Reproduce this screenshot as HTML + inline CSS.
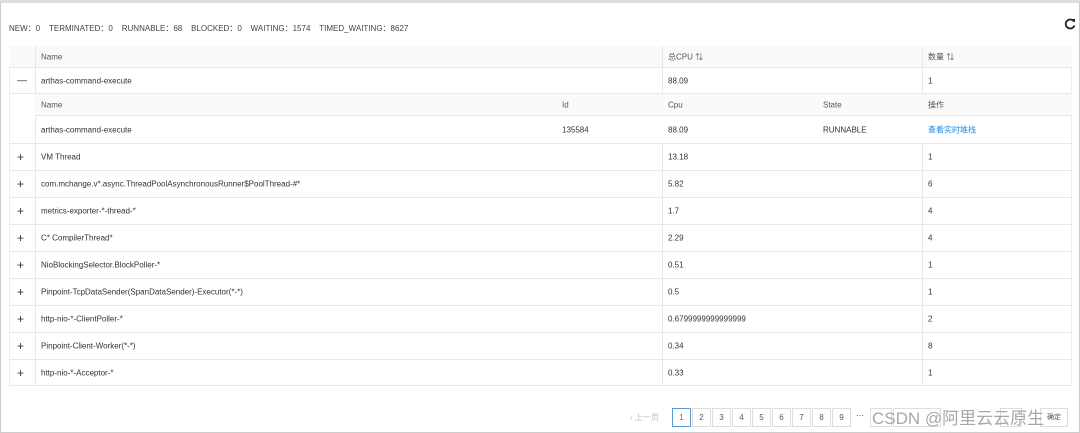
<!DOCTYPE html><html><head><meta charset="utf-8"><style>
body{margin:0;width:1080px;height:433px;background:#fff;font-family:"Liberation Sans","Noto Sans CJK SC",sans-serif;font-size:8px;color:#333;position:relative;overflow:hidden}
.frame{position:absolute;left:0;top:0;border:1px solid #ccc;border-top:3px solid #ddd;box-sizing:border-box;width:1080px;height:433px}
.abs{position:absolute;white-space:nowrap}
.row{position:absolute;left:9px;width:1063px;border-bottom:1px solid #e8e8e8;box-sizing:border-box}
.hd{background:#fafafa;color:#555}
.c{position:absolute;top:50%;transform:translateY(-50%)}
.v{position:absolute;top:0;bottom:0;border-left:1px solid #e8e8e8}
.pg{position:absolute;top:408px;width:19px;height:19px;border:1px solid #ddd;box-sizing:border-box;text-align:center;line-height:18px;font-size:8px;color:#555}
</style></head><body><div class="frame"></div>
<div class="abs" style="left:9px;top:23px;color:#444">NEW：0&nbsp;&nbsp;&nbsp;&nbsp;TERMINATED：0&nbsp;&nbsp;&nbsp;&nbsp;RUNNABLE：68&nbsp;&nbsp;&nbsp;&nbsp;BLOCKED：0&nbsp;&nbsp;&nbsp;&nbsp;WAITING：1574&nbsp;&nbsp;&nbsp;&nbsp;TIMED_WAITING：8627</div>
<svg class="abs" style="left:1064px;top:18px" width="12" height="12" viewBox="0 0 12 12"><path d="M10 3.5A4.5 4.5 0 1 0 10.5 7.5" fill="none" stroke="#222" stroke-width="1.8"/><path d="M7.5 1L11 1 11 4.5Z" fill="#222"/></svg>
<div style="position:absolute;left:9px;top:46px;width:1063px;height:340px;border:1px solid #eee;border-top:none;box-sizing:border-box"></div>
<div class="row hd" style="top:46px;height:22px"><span class="c" style="left:32px">Name</span><span class="c" style="left:659px">总CPU ⇅</span><span class="c" style="left:919px">数量 ⇅</span><div class="v" style="left:26px"></div><div class="v" style="left:653px"></div><div class="v" style="left:913px"></div></div>
<div class="row" style="top:68px;height:26px"><span class="c" style="left:8px;font-size:10px">—</span><span class="c" style="left:32px">arthas-command-execute</span><span class="c" style="left:659px">88.09</span><span class="c" style="left:919px">1</span><div class="v" style="left:26px"></div><div class="v" style="left:653px"></div><div class="v" style="left:913px"></div></div>
<div class="row" style="top:94px;height:50px"><div class="v" style="left:26px"></div></div>
<div class="row hd" style="top:94px;left:35px;width:1037px;height:22px"><span class="c" style="left:6px">Name</span><span class="c" style="left:527px">Id</span><span class="c" style="left:633px">Cpu</span><span class="c" style="left:788px">State</span><span class="c" style="left:893px">操作</span></div>
<div class="row" style="top:116px;left:35px;width:1037px;height:28px"><span class="c" style="left:6px">arthas-command-execute</span><span class="c" style="left:527px">135584</span><span class="c" style="left:633px">88.09</span><span class="c" style="left:788px">RUNNABLE</span><span class="c" style="left:893px;color:#1e88e5">查看实时堆栈</span></div>
<div class="row" style="top:144px;height:27px"><span class="c" style="left:8px;font-size:12px">+</span><span class="c" style="left:32px">VM Thread</span><span class="c" style="left:659px">13.18</span><span class="c" style="left:919px">1</span><div class="v" style="left:26px"></div><div class="v" style="left:653px"></div><div class="v" style="left:913px"></div></div>
<div class="row" style="top:171px;height:27px"><span class="c" style="left:8px;font-size:12px">+</span><span class="c" style="left:32px">com.mchange.v*.async.ThreadPoolAsynchronousRunner$PoolThread-#*</span><span class="c" style="left:659px">5.82</span><span class="c" style="left:919px">6</span><div class="v" style="left:26px"></div><div class="v" style="left:653px"></div><div class="v" style="left:913px"></div></div>
<div class="row" style="top:198px;height:27px"><span class="c" style="left:8px;font-size:12px">+</span><span class="c" style="left:32px">metrics-exporter-*-thread-*</span><span class="c" style="left:659px">1.7</span><span class="c" style="left:919px">4</span><div class="v" style="left:26px"></div><div class="v" style="left:653px"></div><div class="v" style="left:913px"></div></div>
<div class="row" style="top:225px;height:27px"><span class="c" style="left:8px;font-size:12px">+</span><span class="c" style="left:32px">C* CompilerThread*</span><span class="c" style="left:659px">2.29</span><span class="c" style="left:919px">4</span><div class="v" style="left:26px"></div><div class="v" style="left:653px"></div><div class="v" style="left:913px"></div></div>
<div class="row" style="top:252px;height:27px"><span class="c" style="left:8px;font-size:12px">+</span><span class="c" style="left:32px">NioBlockingSelector.BlockPoller-*</span><span class="c" style="left:659px">0.51</span><span class="c" style="left:919px">1</span><div class="v" style="left:26px"></div><div class="v" style="left:653px"></div><div class="v" style="left:913px"></div></div>
<div class="row" style="top:279px;height:27px"><span class="c" style="left:8px;font-size:12px">+</span><span class="c" style="left:32px">Pinpoint-TcpDataSender(SpanDataSender)-Executor(*-*)</span><span class="c" style="left:659px">0.5</span><span class="c" style="left:919px">1</span><div class="v" style="left:26px"></div><div class="v" style="left:653px"></div><div class="v" style="left:913px"></div></div>
<div class="row" style="top:306px;height:27px"><span class="c" style="left:8px;font-size:12px">+</span><span class="c" style="left:32px">http-nio-*-ClientPoller-*</span><span class="c" style="left:659px">0.6799999999999999</span><span class="c" style="left:919px">2</span><div class="v" style="left:26px"></div><div class="v" style="left:653px"></div><div class="v" style="left:913px"></div></div>
<div class="row" style="top:333px;height:27px"><span class="c" style="left:8px;font-size:12px">+</span><span class="c" style="left:32px">Pinpoint-Client-Worker(*-*)</span><span class="c" style="left:659px">0.34</span><span class="c" style="left:919px">8</span><div class="v" style="left:26px"></div><div class="v" style="left:653px"></div><div class="v" style="left:913px"></div></div>
<div class="row" style="top:360px;height:26px"><span class="c" style="left:8px;font-size:12px">+</span><span class="c" style="left:32px">http-nio-*-Acceptor-*</span><span class="c" style="left:659px">0.33</span><span class="c" style="left:919px">1</span><div class="v" style="left:26px"></div><div class="v" style="left:653px"></div><div class="v" style="left:913px"></div></div>
<div class="abs" style="left:630px;top:412px;color:#bbb">‹ 上一页</div>
<div class="pg" style="left:672px;border-color:#5b9bd5;color:#1e88e5">1</div>
<div class="pg" style="left:692px">2</div><div class="pg" style="left:712px">3</div><div class="pg" style="left:732px">4</div><div class="pg" style="left:752px">5</div><div class="pg" style="left:772px">6</div><div class="pg" style="left:792px">7</div><div class="pg" style="left:812px">8</div><div class="pg" style="left:832px">9</div>
<div class="abs" style="left:856px;top:411px">···</div>
<div class="pg" style="left:870px;width:22px"></div><div class="pg" style="left:893px;width:48px"></div><div class="pg" style="left:1000px;width:22px"></div><div class="pg" style="left:1040px;width:28px;font-size:7px">确定</div>
<div class="abs" style="left:872px;top:404px;font-size:17px;color:#999;opacity:.85">CSDN @阿里云云原生</div>
</body></html>
